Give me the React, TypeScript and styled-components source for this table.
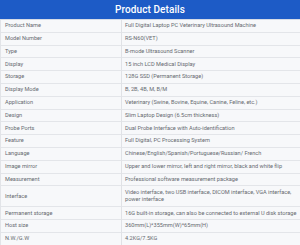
import React from "react";
import styled, { createGlobalStyle } from "styled-components";

const GlobalStyle = createGlobalStyle`
  html, body {
    margin: 0;
    padding: 0;
    background: #fff;
  }
  body {
    font-family: Roboto, "Liberation Sans", Arial, sans-serif;
  }
`;

const Page = styled.div`
  width: 300px;
  height: 245px;
  overflow: hidden;
  background: #fff;
`;

const Header = styled.div`
  height: 19px;
  background: #1d5bc6;
  display: flex;
  align-items: center;
  justify-content: center;
  border-bottom: 1px solid #d5dbe6;
`;

const Title = styled.h2`
  margin: 0;
  color: #fff;
  font-size: 10px;
  font-weight: 500;
  letter-spacing: 0.1px;
`;

const Table = styled.div`
  display: grid;
  grid-template-columns: 121px 1fr;
  border-left: 1px solid #e2e4e8;
`;

const Cell = styled.div<{ $tall?: boolean; $label?: boolean }>`
  box-sizing: border-box;
  height: ${(p) => (p.$tall ? "21px" : "12.8px")};
  display: flex;
  align-items: center;
  padding: 0 ${(p) => (p.$label ? "4px" : "3px")};
  background: #f7f8fa;
  border-bottom: 1px solid #e3e5e9;
  border-right: ${(p) => (p.$label ? "1px solid #e0e2e6" : "none")};
  color: #666a70;
  font-size: 5.6px;
  line-height: 7.5px;
  white-space: nowrap;
`;

type Spec = { label: string; value: React.ReactNode; tall?: boolean };

const specs: Spec[] = [
  { label: "Product Name", value: "Full Digital Laptop PC Veterinary Ultrasound Machine" },
  { label: "Model Number", value: "RS-N60(VET)" },
  { label: "Type", value: "B-mode Ultrasound Scanner" },
  { label: "Display", value: "15 inch LCD Medical Display" },
  { label: "Storage", value: "128G SSD (Permanent Storage)" },
  { label: "Display Mode", value: "B, 2B, 4B, M, B/M" },
  { label: "Application", value: "Veterinary (Swine, Bovine, Equine, Canine, Feline, etc.)" },
  { label: "Design", value: "Slim Laptop Design (6.5cm thickness)" },
  { label: "Probe Ports", value: "Dual Probe Interface with Auto-identification" },
  { label: "Feature", value: "Full Digital, PC Processing System" },
  { label: "Language", value: "Chinese/English/Spanish/Portuguese/Russian/ French" },
  { label: "Image mirror", value: "Upper and lower mirror, left and right mirror, black and white flip" },
  { label: "Measurement", value: "Professional software measurement package" },
  {
    label: "Interface",
    value: (
      <span>
        Video interface, two USB interface, DICOM interface, VGA interface,
        <br />
        power interface
      </span>
    ),
    tall: true,
  },
  { label: "Permanent storage", value: "16G built-in storage, can also be connected to external U disk storage" },
  { label: "Host size", value: "360mm(L)*355mm(W)*65mm(H)" },
  { label: "N.W./G.W", value: "4.2KG/7.5KG" },
];

export default function App() {
  return (
    <Page>
      <GlobalStyle />
      <Header>
        <Title>Product Details</Title>
      </Header>
      <Table>
        {specs.map((s) => (
          <React.Fragment key={s.label}>
            <Cell $label $tall={s.tall}>{s.label}</Cell>
            <Cell $tall={s.tall}>{s.value}</Cell>
          </React.Fragment>
        ))}
      </Table>
    </Page>
  );
}
